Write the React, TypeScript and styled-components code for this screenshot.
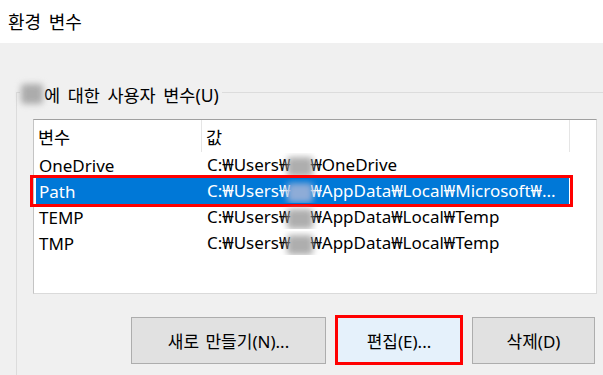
import React from 'react';
import styled, { createGlobalStyle } from 'styled-components';

const GlobalStyle = createGlobalStyle`
  html, body {
    margin: 0;
    padding: 0;
    background: #f0f0f0;
  }
  body {
    font-family: "Noto Sans", "Noto Sans CJK KR", sans-serif;
    color: #000;
  }
`;

type Variable = { name: string; prefix: string; suffix: string; selected?: boolean };

const variables: Variable[] = [
  { name: 'OneDrive', prefix: 'C:₩Users₩', suffix: '₩OneDrive' },
  { name: 'Path', prefix: 'C:₩Users₩', suffix: '₩AppData₩Local₩Microsoft₩...', selected: true },
  { name: 'TEMP', prefix: 'C:₩Users₩', suffix: '₩AppData₩Local₩Temp' },
  { name: 'TMP', prefix: 'C:₩Users₩', suffix: '₩AppData₩Local₩Temp' },
];

const App: React.FC = () => {
  return (
    <Page>
      <GlobalStyle />
      <TitleBar>환경 변수</TitleBar>

      <GroupBox>
        <GroupLabel>
          <Blur $width={22} />
          에 대한 사용자 변수(U)
        </GroupLabel>

        <ListBox>
          <HeaderRow>
            <HeaderCell $width={168}>변수</HeaderCell>
            <HeaderCell $width={368}>값</HeaderCell>
          </HeaderRow>
          {variables.map(v => (
            <Row key={v.name} $selected={v.selected}>
              <NameCell>{v.name}</NameCell>
              <ValueCell>
                {v.prefix}
                <Blur $width={26} $overlap $selected={v.selected} />
                {v.suffix}
              </ValueCell>
            </Row>
          ))}
        </ListBox>

        <ButtonRow>
          <DialogButton $width={195}>새로 만들기(N)...</DialogButton>
          <DialogButton $width={124} $focused>
            편집(E)...
          </DialogButton>
          <DialogButton $width={123}>삭제(D)</DialogButton>
        </ButtonRow>
      </GroupBox>
    </Page>
  );
};

const Page = styled.div`
  width: 603px;
  height: 375px;
  overflow: hidden;
`;

const TitleBar = styled.div`
  height: 43px;
  background: #fff;
  display: flex;
  align-items: center;
  padding: 0 0 1px 8px;
  box-sizing: border-box;
  font-size: 18px;
  word-spacing: 3px;
`;

const GroupBox = styled.div`
  margin: 49px 0 0 16px;
  padding-left: 16px;
  border-top: 1px solid #dcdcdc;
  border-left: 1px solid #dcdcdc;
  height: 300px;
`;

const GroupLabel = styled.div`
  display: flex;
  align-items: center;
  width: fit-content;
  margin: -12px 0 0 -13px;
  padding: 0 3px 0 0;
  height: 26px;
  background: #f0f0f0;
  font-size: 17.5px;
  word-spacing: 3px;
  white-space: pre;
`;

const Blur = styled.span<{ $width: number; $selected?: boolean; $overlap?: boolean }>`
  display: inline-block;
  width: ${p => p.$width}px;
  height: 20px;
  margin: 0 ${p => (p.$overlap ? '-3px' : '1px')};
  vertical-align: middle;
  border-radius: 4px;
  position: relative;
  background: ${p => (p.$selected ? 'rgba(150, 175, 215, 0.95)' : 'rgba(160, 160, 160, 0.85)')};
  filter: blur(3px);
`;

const ListBox = styled.div`
  margin-top: 12px;
  width: 564px;
  height: 175px;
  box-sizing: border-box;
  background: #fff;
  border: 1px solid #dadada;
  border-top-color: #a0a0a0;
  border-left-color: #c4c4c4;
`;

const HeaderRow = styled.div`
  display: flex;
  height: 32px;
`;

const HeaderCell = styled.div<{ $width: number }>`
  width: ${p => p.$width}px;
  padding-left: 4px;
  box-sizing: border-box;
  border-right: 1px solid #e5e5e5;
  display: flex;
  align-items: center;
  font-size: 17.5px;
`;

const Row = styled.div<{ $selected?: boolean }>`
  position: relative;
  display: flex;
  width: 533px;
  height: 26px;
  margin-left: 2px;
  align-items: center;
  font-size: 17px;
  white-space: nowrap;
  background: ${p => (p.$selected ? '#0078d7' : 'transparent')};
  color: ${p => (p.$selected ? '#fff' : '#000')};

  ${p =>
    p.$selected &&
    `
    &::after {
      content: '';
      position: absolute;
      top: -3px;
      bottom: -3px;
      left: -6px;
      right: -4px;
      border: 3px solid #ff0000;
    }
  `}
`;

const NameCell = styled.div`
  width: 168px;
  padding-left: 3px;
  box-sizing: border-box;
`;

const ValueCell = styled.div`
  flex: 1;
  padding-left: 3px;
  overflow: hidden;
`;

const ButtonRow = styled.div`
  display: flex;
  justify-content: flex-end;
  gap: 11px;
  width: 562px;
  margin-top: 23px;
`;

const DialogButton = styled.button<{ $width: number; $focused?: boolean }>`
  position: relative;
  width: ${p => p.$width}px;
  height: 47px;
  font-family: inherit;
  font-size: 17px;
  word-spacing: 2px;
  color: #000;
  background: ${p => (p.$focused ? '#e5f1fb' : '#e1e1e1')};
  border: 1px solid ${p => (p.$focused ? '#0078d7' : '#adadad')};
  padding: 0;

  ${p =>
    p.$focused &&
    `
    &::after {
      content: '';
      position: absolute;
      top: -3px;
      bottom: -2px;
      left: -3px;
      right: -3px;
      border: 3px solid #ff0000;
    }
  `}
`;

export default App;
